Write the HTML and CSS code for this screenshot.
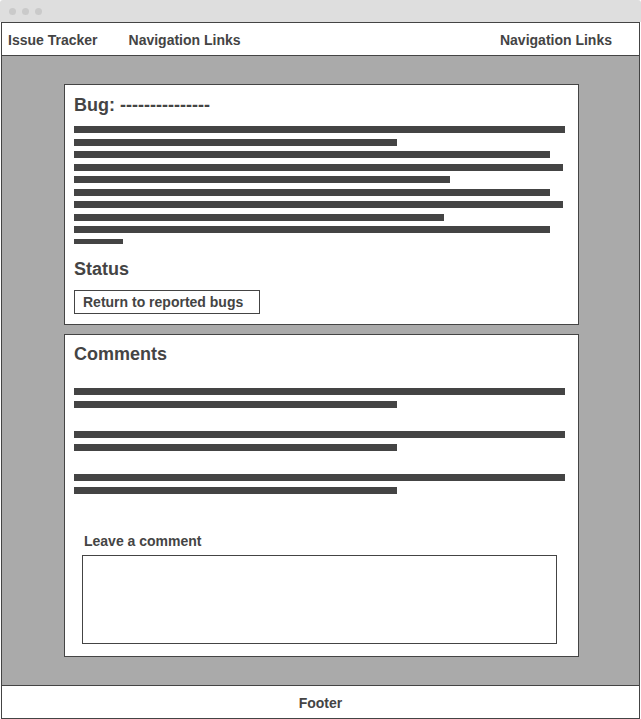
FILE: index.html
```html
<!DOCTYPE html>
<html lang="en">
<head>
    <meta charset="UTF-8">
    <meta name="viewport" content="width=device-width, initial-scale=1.0">
    <title>Issue Tracker - Bug</title>
    <link rel="stylesheet" href="styles.css">
</head>
<body>
    <!-- Window chrome -->
    <div class="titlebar">
        <span class="dot"></span>
        <span class="dot"></span>
        <span class="dot"></span>
    </div>

    <div class="frame">
        <header class="topnav">
            <span class="brand">Issue Tracker</span>
            <span class="nav-link">Navigation Links</span>
            <span class="nav-link nav-right">Navigation Links</span>
        </header>

        <main class="content">
            <!-- Bug details -->
            <section class="card bug-card">
                <h2>Bug: ---------------</h2>
                <div class="lines bug-lines">
                    <div class="line" style="width: 491px;"></div>
                    <div class="line" style="width: 323px;"></div>
                    <div class="line" style="width: 476px;"></div>
                    <div class="line" style="width: 489px;"></div>
                    <div class="line" style="width: 376px;"></div>
                    <div class="line" style="width: 476px;"></div>
                    <div class="line" style="width: 489px;"></div>
                    <div class="line" style="width: 370px;"></div>
                    <div class="line" style="width: 476px;"></div>
                    <div class="line line-end" style="width: 49px;"></div>
                </div>
                <h2 class="status">Status</h2>
                <button class="back-button">Return to reported bugs</button>
            </section>

            <!-- Comments -->
            <section class="card comments-card">
                <h2>Comments</h2>
                <div class="comment-list">
                    <div class="lines comment">
                        <div class="line" style="width: 491px;"></div>
                        <div class="line" style="width: 323px;"></div>
                    </div>
                    <div class="lines comment">
                        <div class="line" style="width: 491px;"></div>
                        <div class="line" style="width: 323px;"></div>
                    </div>
                    <div class="lines comment">
                        <div class="line" style="width: 491px;"></div>
                        <div class="line" style="width: 323px;"></div>
                    </div>
                </div>
                <div class="comment-form">
                    <label for="comment">Leave a comment</label>
                    <textarea id="comment"></textarea>
                </div>
            </section>
        </main>

        <footer class="footer">Footer</footer>
    </div>
</body>
</html>
```

FILE: styles.css
```css
* {
    box-sizing: border-box;
}
body {
    margin: 0;
    font-family: "Liberation Sans", Arial, sans-serif;
    color: #444;
    background-color: #fff;
}
.titlebar {
    height: 22px;
    background-color: #dedede;
    display: flex;
    align-items: center;
    gap: 6px;
    padding-left: 9px;
    border-radius: 3px 3px 0 0;
}
.dot {
    width: 7px;
    height: 7px;
    border-radius: 50%;
    background-color: #cacaca;
}
.frame {
    margin: 0 1px;
    border-left: 1px solid #444;
    border-right: 1px solid #444;
}
.topnav {
    display: flex;
    height: 34px;
    padding: 2px 27px 0 6px;
    line-height: 30px;
    border-top: 1px solid #444;
    border-bottom: 1px solid #444;
    font-size: 14px;
    font-weight: bold;
}
.brand {
    margin-right: 31px;
}
.nav-right {
    margin-left: auto;
}
.content {
    background-color: #aaa;
    padding: 28px 60px 28px 62px;
    display: flex;
    flex-direction: column;
    gap: 9px;
}
.card {
    width: 515px;
    background-color: #fff;
    border: 1px solid #444;
    padding: 9px 12px 10px 9px;
}
.card h2 {
    margin: 0;
    font-size: 18px;
    line-height: 22px;
}
.lines {
    display: flex;
    flex-direction: column;
}
.line {
    height: 7px;
    background-color: #444;
}
.bug-lines {
    margin-top: 10px;
    gap: 5.5px;
}
.line-end {
    height: 5px;
}
.card h2.status {
    margin-top: 14.5px;
}
.back-button {
    display: block;
    width: 186px;
    height: 24px;
    margin-top: 10px;
    padding: 0 8px;
    border: 1px solid #444;
    background-color: #fff;
    color: #444;
    font-family: inherit;
    font-size: 14px;
    font-weight: bold;
    line-height: 22px;
    text-align: left;
    cursor: pointer;
}
.comments-card {
    padding-top: 8px;
    padding-bottom: 12px;
}
.comment-list {
    margin-top: 23px;
    display: flex;
    flex-direction: column;
    gap: 23px;
}
.comment {
    gap: 6px;
}
.comment-form {
    margin-top: 39px;
    padding-left: 8px;
}
.comment-form label {
    display: block;
    padding-left: 2px;
    font-size: 14px;
    font-weight: bold;
    line-height: 16px;
}
.comment-form textarea {
    display: block;
    width: 475px;
    height: 89px;
    margin-top: 6px;
    border: 1px solid #444;
    border-radius: 0;
    resize: none;
    font-family: inherit;
}
.footer {
    height: 34px;
    padding-top: 2px;
    line-height: 30px;
    text-align: center;
    font-size: 14px;
    font-weight: bold;
    border-top: 1px solid #444;
    border-bottom: 1px solid #444;
}
```
